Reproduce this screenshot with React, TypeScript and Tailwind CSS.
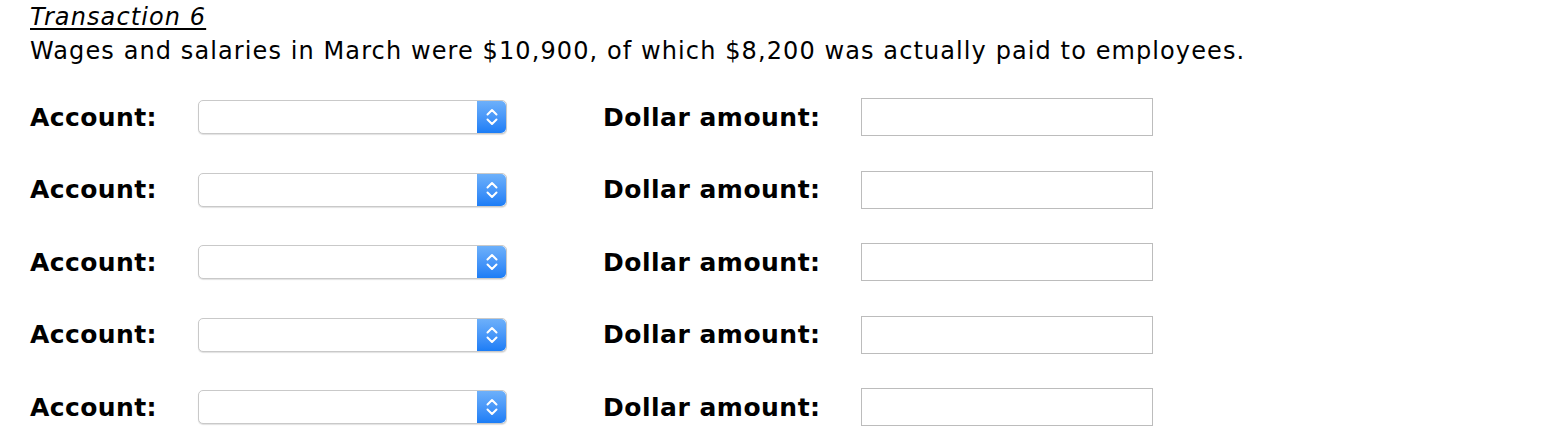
import React from "react";

const FONT = "font-['DejaVu_Sans','Verdana',sans-serif]";

function Stepper() {
  return (
    <div className="flex h-full w-[29px] items-center justify-center rounded-r-[5px] bg-gradient-to-b from-[#6db0fa] to-[#1b7df6]">
      <svg width="14" height="24" viewBox="0 0 14 24" fill="none">
        <path d="M2.5 9.5 L7 5 L11.5 9.5" stroke="white" strokeWidth="2" strokeLinecap="round" strokeLinejoin="round" />
        <path d="M2.5 14.5 L7 19 L11.5 14.5" stroke="white" strokeWidth="2" strokeLinecap="round" strokeLinejoin="round" />
      </svg>
    </div>
  );
}

function Row() {
  return (
    <div className="flex h-[72.5px] items-center">
      <div className="w-[168px] text-[25px] font-bold tracking-[0.4px] text-black">Account:</div>
      <div className="flex h-[34px] w-[309px] items-stretch rounded-[5px] border border-[#c9c9c9] bg-white shadow-[0_1px_1px_rgba(0,0,0,0.12)]">
        <div className="flex-1" />
        <Stepper />
      </div>
      <div className="ml-[96px] w-[258px] text-[25px] font-bold tracking-[0.5px] text-black">Dollar amount:</div>
      <div className="h-[38px] w-[292px] border border-[#bcbcbc] bg-white" />
    </div>
  );
}

export default function App() {
  return (
    <div className={`${FONT} h-[448px] w-[1568px] overflow-hidden bg-white pl-[30px] text-black`}>
      <div className="text-[24px] italic leading-[34px] tracking-[1.1px] underline underline-offset-[3px]">Transaction 6</div>
      <div className="text-[24px] leading-[34px] tracking-[1.1px]">
        Wages and salaries in March were $10,900, of which $8,200 was actually paid to employees.
      </div>
      <div className="mt-[13px]">
        {[0, 1, 2, 3, 4].map((i) => (
          <Row key={i} />
        ))}
      </div>
    </div>
  );
}
